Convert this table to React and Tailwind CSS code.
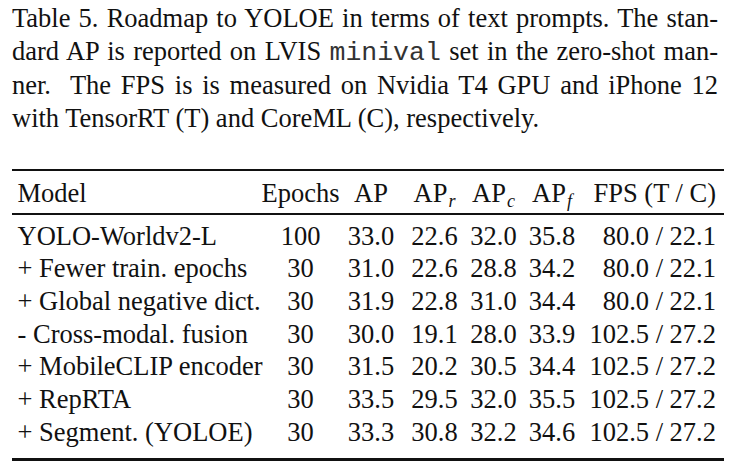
import React from "react";

const rows = [
  ["YOLO-Worldv2-L", "100", "33.0", "22.6", "32.0", "35.8", "80.0 / 22.1"],
  ["+ Fewer train. epochs", "30", "31.0", "22.6", "28.8", "34.2", "80.0 / 22.1"],
  ["+ Global negative dict.", "30", "31.9", "22.8", "31.0", "34.4", "80.0 / 22.1"],
  ["- Cross-modal. fusion", "30", "30.0", "19.1", "28.0", "33.9", "102.5 / 27.2"],
  ["+ MobileCLIP encoder", "30", "31.5", "20.2", "30.5", "34.4", "102.5 / 27.2"],
  ["+ RepRTA", "30", "33.5", "29.5", "32.0", "35.5", "102.5 / 27.2"],
  ["+ Segment. (YOLOE)", "30", "33.3", "30.8", "32.2", "34.6", "102.5 / 27.2"],
];

function Sub({ children }) {
  return (
    <span className="italic text-[18px] relative top-[5px] ml-[1px]">{children}</span>
  );
}

function Row({ cells }) {
  return (
    <div className="grid grid-cols-[250px_77px_64px_63px_55px_62px_141px] h-[32.7px] leading-[32.7px] whitespace-nowrap">
      <div className="pl-[5.5px]">{cells[0]}</div>
      {cells.slice(1, 6).map((c, i) => (
        <div key={i} className="flex justify-center">
          <span>{c}</span>
        </div>
      ))}
      <div className="text-right pr-[8px]">{cells[6]}</div>
    </div>
  );
}

export default function App() {
  return (
    <div className="w-[736px] h-[472px] bg-white text-[#111] overflow-hidden font-['Liberation_Serif','Times_New_Roman',serif]">
      <div className="ml-[12px] w-[706px] pt-[2px] text-[26.5px] leading-[32.7px]">
        <div className="text-justify [text-align-last:justify]">Table 5. Roadmap to YOLOE in terms of text prompts. The stan-</div>
        <div className="text-justify [text-align-last:justify]">
          dard AP is reported on LVIS{" "}
          <span className="font-['Liberation_Mono','Courier_New',monospace] text-[#333]">minival</span>{" "}
          set in the zero-shot man-
        </div>
        <div className="text-justify [text-align-last:justify]">
          ner.&nbsp; The FPS is is measured on Nvidia T4 GPU and iPhone 12
        </div>
        <div>with TensorRT (T) and CoreML (C), respectively.</div>
      </div>

      <div className="ml-[12px] w-[712px] mt-[34.2px] text-[26.5px]">
        <div className="h-[2.2px] bg-[#111]" />
        <div className="pt-[6.2px]">
          <Row
            cells={[
              "Model",
              "Epochs",
              "AP",
              <>AP<Sub>r</Sub></>,
              <>AP<Sub>c</Sub></>,
              <>AP<Sub>f</Sub></>,
              "FPS (T / C)",
            ]}
          />
        </div>
        <div className="mt-[3px] h-[1.6px] bg-[#111]" />
        <div className="pt-[5px]">
          {rows.map((r, i) => (
            <Row key={i} cells={r} />
          ))}
        </div>
        <div className="mt-[10px] h-[2.2px] bg-[#111]" />
      </div>
    </div>
  );
}
